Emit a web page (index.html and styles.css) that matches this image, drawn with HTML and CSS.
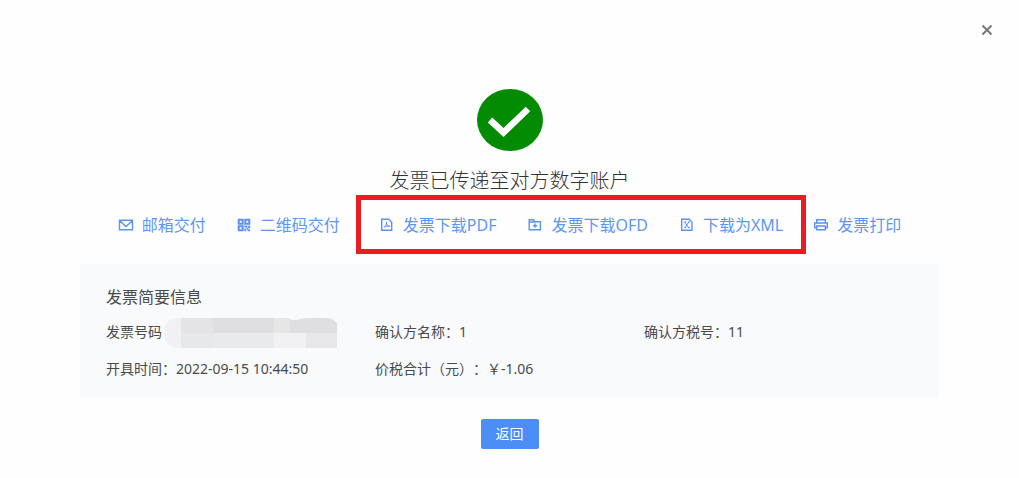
FILE: index.html
```html
<!DOCTYPE html>
<html lang="zh-CN">
<head>
    <meta charset="UTF-8">
    <meta name="viewport" content="width=device-width, initial-scale=1.0">
    <title>发票交付</title>
    <link rel="stylesheet" href="styles.css">
</head>
<body>
    <div class="dialog">
        <div class="dialog-header">
            <button class="close" type="button" aria-label="关闭">
                <svg viewBox="0 0 12 12"><path d="M1.5 1.5l9 9M10.5 1.5l-9 9"/></svg>
            </button>
        </div>

        <div class="result">
            <svg class="result-icon" viewBox="0 0 66 62">
                <ellipse cx="33" cy="31" rx="33" ry="31" fill="#048b04"/>
                <path d="M13 31l13.500 12.500L51 20" fill="none" stroke="#fff" stroke-width="6.500"/>
            </svg>
            <h1 class="result-title">发票已传递至对方数字账户</h1>
        </div>

        <div class="actions">
            <a href="#" class="action">
                <svg viewBox="0 0 16 16"><path d="M1.500 3.200h13v9.600h-13zM2 4l6 5.500L14 4"/></svg>
                邮箱交付
            </a>
            <a href="#" class="action action-qr">
                <svg viewBox="0 0 16 16">
                    <path class="bold" d="M2.700 2.700h4v4h-4zM9.300 2.700h4v4h-4zM2.700 9.300h4v4h-4z"/>
                    <path class="fill" d="M8.400 8.400h3v2.200h-3zM12.200 8.400h2v2.800h-2zM10.600 10.800h1.800v1.800h-1.800zM8.400 11.600h1.800v2.600H8.400zM11.600 12.400h2.600v1.800h-2.600z"/>
                </svg>
                二维码交付
            </a>
            <!-- Download links -->
            <div class="downloads">
                <a href="#" class="action">
                    <svg viewBox="0 0 16 16">
                        <path d="M2.700 2.200h7l3 3v8H2.700z"/>
                        <path class="thin" d="M7.400 4.800c.7 2.600-.8 4.400-2.600 5.800M7.500 6.500c.5 2 1.800 2.600 3.600 2.900M5.500 9.800c1.600-.7 3.200-1 5.200-.5"/>
                    </svg>
                    发票下载PDF
                </a>
                <a href="#" class="action">
                    <svg viewBox="0 0 16 16">
                        <path d="M2.200 12.700V2.700h4.200l1.600 2h5.400v8zM2.200 5h6M8 6.600v4.200M5.900 8.700h4.200"/>
                    </svg>
                    发票下载OFD
                </a>
                <a href="#" class="action">
                    <svg viewBox="0 0 16 16">
                        <path d="M2.700 2.200h7.600l2.700 3v8H2.700z"/>
                        <path class="thin" d="M5.800 5l3.800 5.600M9.900 5L6 10.600M4.800 5h2.300M8.800 5H11M5 10.600h2.200M8.800 10.600H11"/>
                    </svg>
                    下载为XML
                </a>
            </div>
            <a href="#" class="action">
                <svg viewBox="0 0 16 16">
                    <path d="M3.700 6V2.700h8.600V6M3.700 10.700h-2V6h12.600v4.700h-2M3.700 9h8.600v3.800H3.700z"/>
                </svg>
                发票打印
            </a>
        </div>

        <div class="info">
            <h2 class="info-title">发票简要信息</h2>
            <div class="info-grid">
                <div class="info-item">
                    发票号码
                    <svg class="mask" viewBox="0 0 173 30">
                        <defs>
                            <clipPath id="mask-shape">
                                <path d="M12 0H124q6 4 12 1Q142 0 148 0H160Q169 0 173 5V30H12Q0 27 0 15 0 2 12 0z"/>
                            </clipPath>
                        </defs>
                        <g clip-path="url(#mask-shape)">
                            <rect width="173" height="30" fill="#f1f1f3"/>
                            <rect x="17" width="32" height="15" fill="#e4e4e6"/>
                            <rect x="49" width="61" height="15" fill="#dedee0"/>
                            <rect x="110" width="16" height="15" fill="#e6e6e7"/>
                            <rect x="126" width="47" height="15" fill="#dfdfe2"/>
                            <rect x="17" y="15" width="32" height="15" fill="#e7e8ea"/>
                            <rect x="49" y="15" width="61" height="15" fill="#e9eaec"/>
                            <rect x="142" y="15" width="31" height="15" fill="#e7e7ea"/>
                        </g>
                    </svg>
                </div>
                <div class="info-item">确认方名称：1</div>
                <div class="info-item">确认方税号：11</div>
                <div class="info-item">开具时间：2022-09-15 10:44:50</div>
                <div class="info-item">价税合计（元）：￥-1.06</div>
            </div>
        </div>

        <div class="dialog-footer">
            <button class="back" type="button">返回</button>
        </div>
    </div>
</body>
</html>
```
FILE: styles.css
```css
* {
    box-sizing: border-box;
    margin: 0;
    padding: 0;
}

body {
    font-family: "Noto Sans", "Noto Sans CJK SC", sans-serif;
    background-color: #fefefe;
    color: #4a4a4a;
    font-size: 14px;
    text-spacing-trim: space-all;
}

.dialog {
    display: flex;
    flex-direction: column;
    padding: 20px 80px;
}

.dialog-header {
    display: flex;
    justify-content: flex-end;
    margin-right: -58px;
}

.close {
    display: flex;
    align-items: center;
    justify-content: center;
    width: 20px;
    height: 20px;
    border: none;
    background: none;
    cursor: pointer;
}

.close svg {
    width: 12px;
    height: 12px;
    stroke: #777;
    stroke-width: 2;
}

.result {
    display: flex;
    flex-direction: column;
    align-items: center;
    margin-top: 49px;
}

.result-icon {
    width: 66px;
    height: 62px;
}

.result-title {
    margin-top: 16px;
    color: #333;
    font-size: 20px;
    font-weight: 300;
    line-height: 28px;
}

.actions {
    display: flex;
    justify-content: center;
    align-items: center;
}

.action {
    display: flex;
    align-items: center;
    gap: 8px;
    color: #5e96f5;
    font-size: 16px;
    line-height: 24px;
    text-decoration: none;
    white-space: nowrap;
}

.action svg {
    width: 16px;
    height: 16px;
    fill: none;
    stroke: #5a93f3;
    stroke-width: 1.4;
}

.action .thin {
    stroke-width: 1;
}

.action .bold {
    stroke-width: 2;
}

.action .fill {
    fill: #5a93f3;
    stroke: none;
}

.action-qr {
    margin-left: 30px;
}

.downloads {
    display: flex;
    gap: 31px;
    margin: 0 7px 0 16px;
    padding: 13px 18px 12px;
    border: 5px solid #ed1c24;
}

.info {
    margin-top: 10px;
    padding: 22px 26px 11px;
    background-color: #f9fafc;
}

.info-title {
    margin-bottom: 4px;
    font-size: 16px;
    font-weight: 400;
    line-height: 22px;
}

.info-grid {
    display: grid;
    grid-template-columns: repeat(3, 1fr);
}

.info-item {
    display: flex;
    align-items: center;
    height: 37px;
    white-space: nowrap;
}

.mask {
    width: 173px;
    height: 30px;
    margin-top: 4px;
    margin-left: 2px;
}

.dialog-footer {
    display: flex;
    justify-content: center;
    margin-top: 22px;
}

.back {
    padding: 0 15px;
    border: none;
    border-radius: 2px;
    background-color: #4c8df6;
    color: #fff;
    font-family: inherit;
    font-size: 14px;
    line-height: 30px;
    cursor: pointer;
}
```
